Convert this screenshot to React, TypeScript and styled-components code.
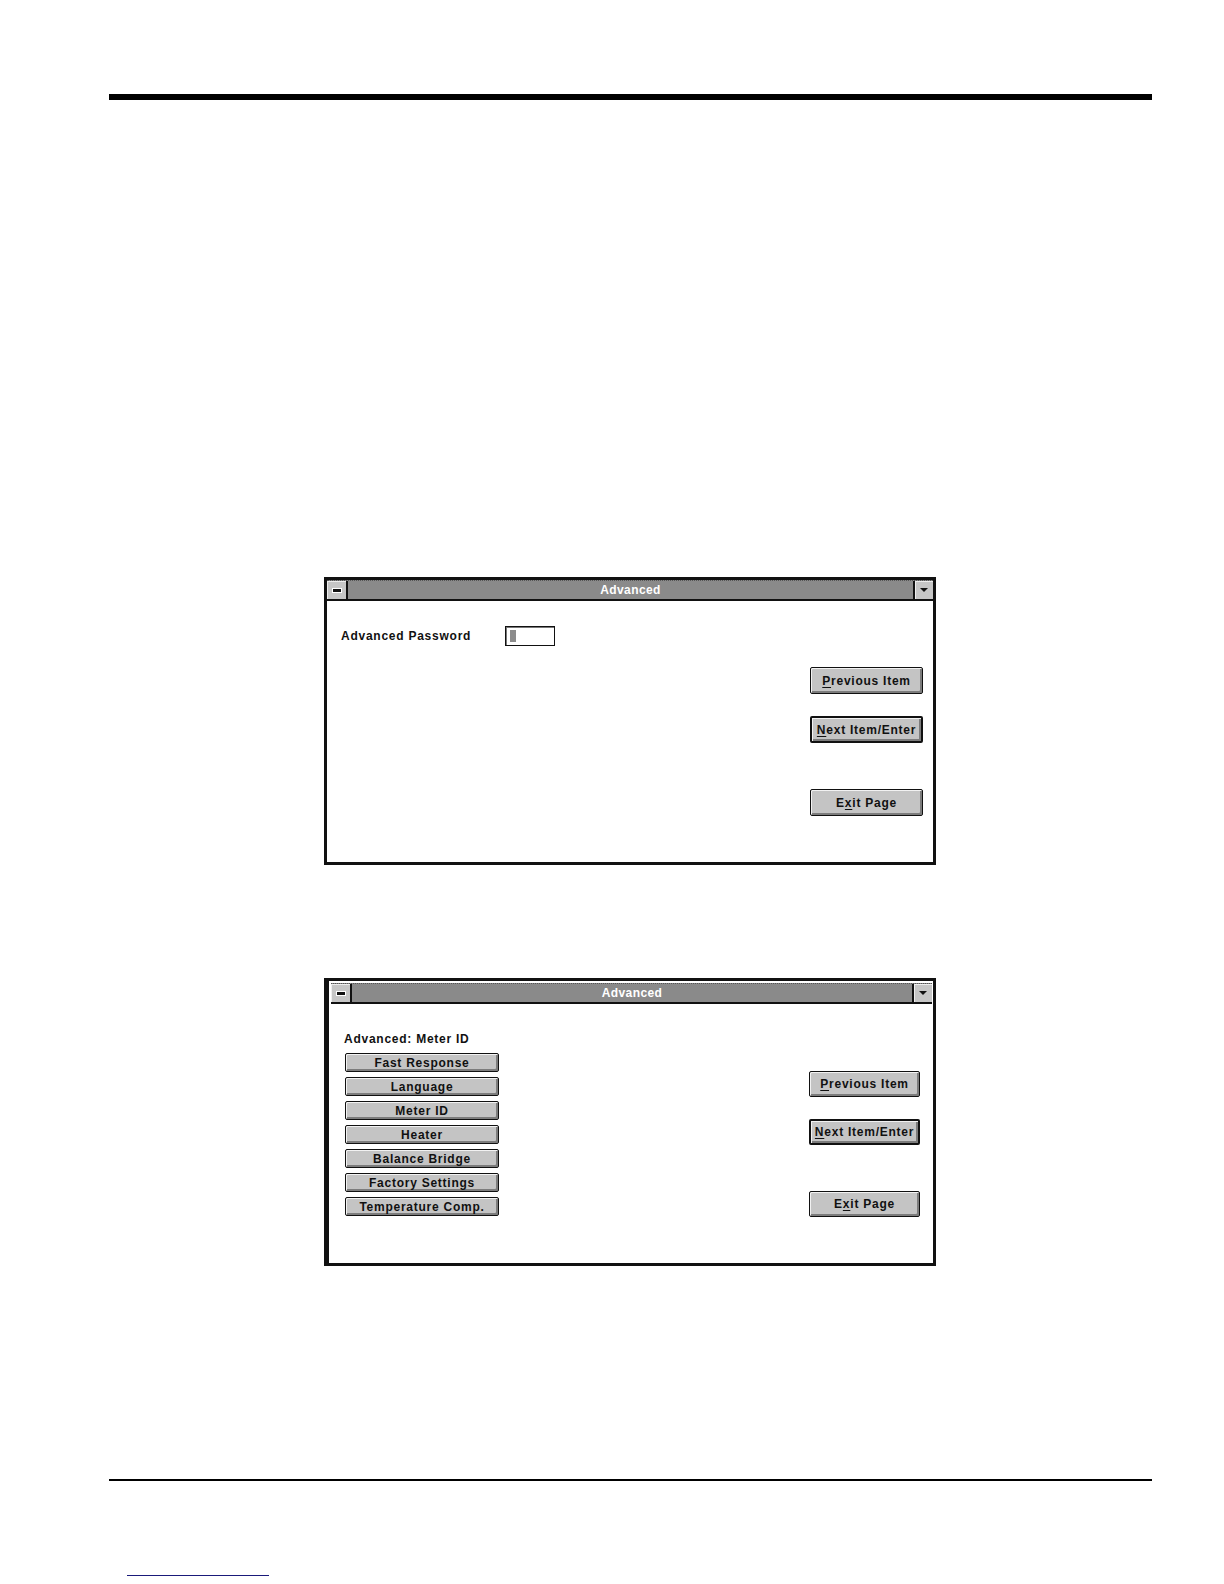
import React from 'react';
import styled, { createGlobalStyle } from 'styled-components';

const Global = createGlobalStyle`
  html, body { margin: 0; padding: 0; background: #fff; }
  body { font-family: "Liberation Sans", Arial, sans-serif; -webkit-font-smoothing: none; }
`;

const Page = styled.div`
  width: 1224px;
  height: 1584px;
  box-sizing: border-box;
  padding-top: 94px;
  display: flex;
  flex-direction: column;
  background: #fff;
`;

const Rule = styled.div<{ $h: number; $mt: number }>`
  margin-top: ${p => p.$mt}px;
  margin-left: 109px;
  width: 1043px;
  height: ${p => p.$h}px;
  background: #000;
`;

const LinkLine = styled.div`
  margin-top: 94px;
  margin-left: 127px;
  width: 142px;
  height: 1px;
  background: #1a1a7a;
`;

const Window = styled.div<{ $mt: number; $left: number }>`
  margin-top: ${p => p.$mt}px;
  margin-left: 324px;
  width: 612px;
  height: 288px;
  box-sizing: border-box;
  border: 3px solid #111;
  border-left-width: ${p => p.$left}px;
  background: #fff;
  display: flex;
  flex-direction: column;
`;

const TitleBar = styled.div<{ $inset: number }>`
  margin: ${p => p.$inset}px ${p => Math.max(0, p.$inset - 1)}px 0 ${p => p.$inset}px;
  height: 18px;
  flex: none;
  display: flex;
  background: #8a8a8a;
  border-bottom: 2px solid #111;
  border-top: 1px dotted #555;
`;

const SysBox = styled.div`
  width: 19px;
  flex: none;
  background: #c6c6c6;
  border-right: 2px solid #111;
  box-shadow: inset 1px 1px 0 #eee;
  display: flex;
  align-items: center;
  justify-content: center;
`;

const Dash = styled.div`
  width: 8px;
  height: 3px;
  background: #111;
  box-shadow: 0 0 0 1px #fff;
`;

const Title = styled.div`
  flex: 1;
  text-align: center;
  color: #fff;
  font-size: 12px;
  font-weight: bold;
  line-height: 18px;
  letter-spacing: 0.4px;
`;

const ArrowBox = styled.div`
  width: 18px;
  flex: none;
  background: #c6c6c6;
  border-left: 2px solid #111;
  box-shadow: inset 1px 1px 0 #eee;
  display: flex;
  align-items: center;
  justify-content: center;
`;

const Tri = styled.div`
  width: 0;
  height: 0;
  border-left: 4px solid transparent;
  border-right: 4px solid transparent;
  border-top: 4px solid #111;
`;

const Body = styled.div`
  flex: 1;
  display: flex;
`;

const LeftPane = styled.div<{ $pl: number; $pt: number }>`
  flex: 1;
  padding-left: ${p => p.$pl}px;
  padding-top: ${p => p.$pt}px;
  display: flex;
  flex-direction: column;
`;

const RightPane = styled.div<{ $pt: number; $pr: number }>`
  flex: none;
  padding-top: ${p => p.$pt}px;
  padding-right: ${p => p.$pr}px;
  display: flex;
  flex-direction: column;
`;

const FieldRow = styled.div`
  display: flex;
  align-items: center;
`;

const Label = styled.div<{ $w?: number }>`
  ${p => (p.$w ? `width: ${p.$w}px;` : '')}
  font-size: 12px;
  font-weight: bold;
  letter-spacing: 0.75px;
  color: #111;
  line-height: 14px;
`;

const Input = styled.div`
  width: 50px;
  height: 20px;
  box-sizing: border-box;
  border: 1px solid #111;
  box-shadow: inset 1px 1px 0 #777;
  padding: 3px 0 3px 4px;
  display: flex;
`;

const Caret = styled.div`
  width: 6px;
  height: 100%;
  background: #8c8c8c;
`;

const Button = styled.div<{ $w: number; $h: number; $mt: number; $def?: boolean }>`
  width: ${p => p.$w}px;
  height: ${p => p.$h}px;
  margin-top: ${p => p.$mt}px;
  box-sizing: border-box;
  border: ${p => (p.$def ? 2 : 1)}px solid #111;
  border-radius: 2px;
  background: #c4c4c4;
  box-shadow: inset 1px 1px 0 #f2f2f2, inset -2px -2px 0 #7c7c7c;
  display: flex;
  align-items: center;
  justify-content: center;
  font-size: 12px;
  font-weight: bold;
  letter-spacing: 0.75px;
  color: #111;
  white-space: nowrap;
  u { text-decoration-thickness: 1px; text-underline-offset: 2px; }
`;

const List = styled.div`
  margin-top: 7px;
  display: flex;
  flex-direction: column;
  gap: 5px;
`;

const ListButton = styled(Button)`
  margin-top: 0;
  margin-left: 1px;
`;

const Chrome: React.FC<{ inset: number }> = ({ inset }) => (
  <TitleBar $inset={inset}>
    <SysBox><Dash /></SysBox>
    <Title>Advanced</Title>
    <ArrowBox><Tri /></ArrowBox>
  </TitleBar>
);

const items = [
  'Fast Response',
  'Language',
  'Meter ID',
  'Heater',
  'Balance Bridge',
  'Factory Settings',
  'Temperature Comp.',
];

export default function App() {
  return (
    <>
      <Global />
      <Page>
        <Rule $h={6} $mt={0} />

        <Window $mt={477} $left={3}>
          <Chrome inset={0} />
          <Body>
            <LeftPane $pl={14} $pt={25}>
              <FieldRow>
                <Label $w={164}>Advanced Password</Label>
                <Input><Caret /></Input>
              </FieldRow>
            </LeftPane>
            <RightPane $pt={66} $pr={10}>
              <Button $w={113} $h={27} $mt={0}><span><u>P</u>revious Item</span></Button>
              <Button $w={113} $h={27} $mt={22} $def><span><u>N</u>ext Item/Enter</span></Button>
              <Button $w={113} $h={27} $mt={46}><span>E<u>x</u>it Page</span></Button>
            </RightPane>
          </Body>
        </Window>

        <Window $mt={113} $left={5}>
          <Chrome inset={2} />
          <Body>
            <LeftPane $pl={15} $pt={28}>
              <Label>Advanced: Meter ID</Label>
              <List>
                {items.map(t => (
                  <ListButton key={t} $w={154} $h={19} $mt={0}>{t}</ListButton>
                ))}
              </List>
            </LeftPane>
            <RightPane $pt={67} $pr={13}>
              <Button $w={111} $h={26} $mt={0}><span><u>P</u>revious Item</span></Button>
              <Button $w={111} $h={26} $mt={22} $def><span><u>N</u>ext Item/Enter</span></Button>
              <Button $w={111} $h={26} $mt={46}><span>E<u>x</u>it Page</span></Button>
            </RightPane>
          </Body>
        </Window>

        <Rule $h={2} $mt={213} />
        <LinkLine />
      </Page>
    </>
  );
}
